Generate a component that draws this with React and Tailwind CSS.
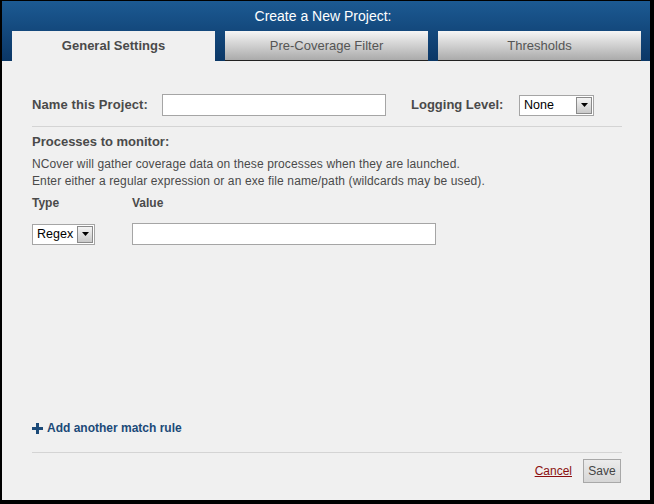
import React from "react";

function Arrow() {
  return (
    <span className="flex h-full w-[16px] items-center justify-center border border-[#8a8a8a] bg-gradient-to-b from-[#f4f4f4] to-[#c9c9c9]">
      <svg width="7" height="4" viewBox="0 0 7 4"><path d="M0 0h7L3.5 4z" fill="#000" /></svg>
    </span>
  );
}

function Select({ value, w }) {
  return (
    <div className={`flex h-[21px] items-center border border-[#a5a5a5] bg-white p-px ${w}`}>
      <span className="flex-1 pl-[3px] text-[12.5px] leading-none text-black">{value}</span>
      <Arrow />
    </div>
  );
}

export default function App() {
  return (
    <div
      className="flex h-[504px] w-[654px] flex-col border-t border-b-4 border-l-2 border-r-4 border-black bg-[#f0f0f0] text-[#4a4a4a]"
      style={{ fontFamily: '"Liberation Sans", Arial, sans-serif' }}
    >
      <div className="flex flex-col bg-gradient-to-b from-[#1c5a93] to-[#0b3766]">
        <div className="flex h-[30px] items-center justify-center pr-[6px] text-[14px] text-white">Create a New Project:</div>
        <div className="flex gap-[10px] pl-[10px]">
          <div className="flex h-[30px] w-[203px] items-center justify-center bg-[#f0f0f0] text-[13px] font-bold text-[#4a4a4a]">General Settings</div>
          <div className="flex h-[30px] w-[203px] items-center justify-center border-b border-[#222] bg-gradient-to-b from-[#f6f6f6] to-[#ababab] text-[13px] text-[#555]">Pre-Coverage Filter</div>
          <div className="flex h-[30px] w-[203px] items-center justify-center border-b border-[#222] bg-gradient-to-b from-[#f6f6f6] to-[#ababab] text-[13px] text-[#555]">Thresholds</div>
        </div>
      </div>

      <div className="flex flex-1 flex-col pl-[30px] pr-[28px] pt-[33px] pb-[17px]">
        <div className="flex h-[22px] items-center">
          <span className="w-[130px] text-[13px] font-bold tracking-[0.1px]">Name this Project:</span>
          <div className="h-[22px] w-[224px] border border-[#a5a5a5] bg-white" />
          <span className="ml-[25px] w-[108px] text-[13px] font-bold">Logging Level:</span>
          <Select value="None" w="w-[75px]" />
        </div>
        <div className="mt-[10px] border-t border-[#d4d4d4]" />
        <div className="mt-[7px] text-[13px] font-bold leading-[16px]">Processes to monitor:</div>
        <div className="mt-[6px] text-[12px] leading-[17px] tracking-[0.12px]">
          <div>NCover will gather coverage data on these processes when they are launched.</div>
          <div>Enter either a regular expression or an exe file name/path (wildcards may be used).</div>
        </div>
        <div className="mt-[5px] flex text-[12px] font-bold leading-[16px]">
          <span className="w-[100px]">Type</span>
          <span>Value</span>
        </div>
        <div className="mt-[12px] flex items-center">
          <div className="w-[100px]"><Select value="Regex" w="w-[63px]" /></div>
          <div className="h-[22px] w-[304px] border border-[#a5a5a5] bg-white" />
        </div>
        <div className="flex-1" />
        <div className="flex h-[16px] items-center gap-[4px] text-[12px] font-bold text-[#1b4a78]">
          <svg width="11" height="11" viewBox="0 0 11 11"><path d="M4 0h3v4h4v3H7v4H4V7H0V4h4z" fill="#1b4a78" /></svg>
          <span>Add another match rule</span>
        </div>
        <div className="mt-[16px] border-t border-[#d4d4d4]" />
        <div className="mt-[6px] flex h-[24px] items-center justify-end gap-[11px] pr-px">
          <span className="text-[12px] text-[#8b1010] underline">Cancel</span>
          <button className="h-[24px] w-[38px] border border-[#a8a8a8] bg-gradient-to-b from-[#ececec] to-[#d6d6d6] text-[12px] text-[#444]">Save</button>
        </div>
      </div>
    </div>
  );
}
